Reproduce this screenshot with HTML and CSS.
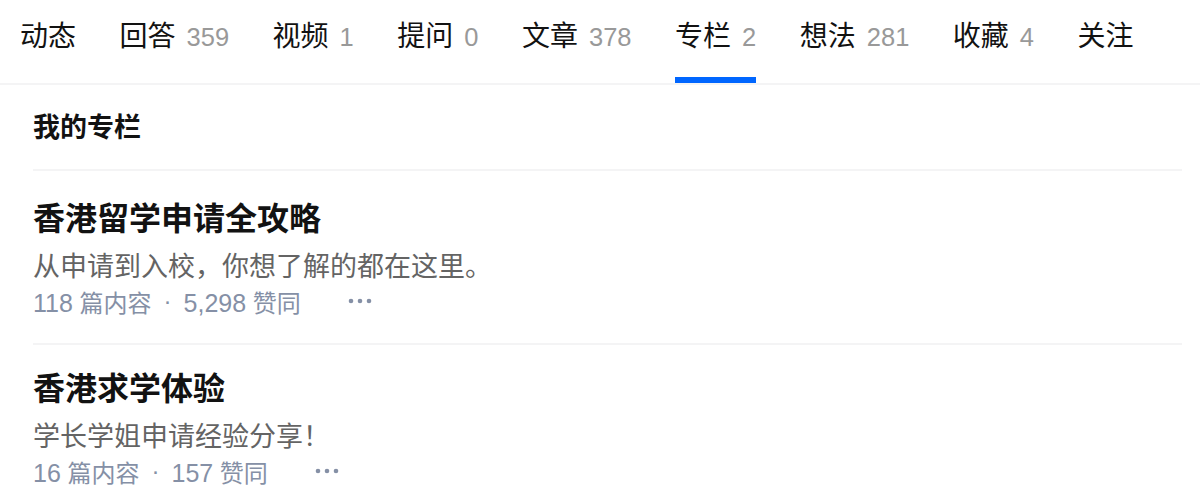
FILE: index.html
```html
<!DOCTYPE html>
<html lang="zh-CN">
<head>
<meta charset="utf-8">
<title>专栏</title>
<link rel="stylesheet" href="styles.css">
</head>
<body>
<nav class="tabs">
  <a class="tab">动态</a>
  <a class="tab">回答<span class="count">359</span></a>
  <a class="tab">视频<span class="count">1</span></a>
  <a class="tab">提问<span class="count">0</span></a>
  <a class="tab">文章<span class="count">378</span></a>
  <a class="tab tab-active">专栏<span class="count">2</span></a>
  <a class="tab">想法<span class="count">281</span></a>
  <a class="tab">收藏<span class="count">4</span></a>
  <a class="tab">关注</a>
</nav>
<section class="list">
  <h2 class="list-header">我的专栏</h2>
  <div class="column-item">
    <h3 class="column-title">香港留学申请全攻略</h3>
    <p class="column-desc">从申请到入校，你想了解的都在这里。</p>
    <div class="column-meta">
      <span><span class="num">118</span> 篇内容</span><span class="dot">·</span><span><span class="num">5,298</span> 赞同</span>
      <button class="more" aria-label="更多"><svg width="24" height="6" viewBox="0 0 24 6"><circle cx="3" cy="3" r="2.3"/><circle cx="12" cy="3" r="2.3"/><circle cx="21" cy="3" r="2.3"/></svg></button>
    </div>
  </div>
  <div class="column-item">
    <h3 class="column-title">香港求学体验</h3>
    <p class="column-desc">学长学姐申请经验分享！</p>
    <div class="column-meta">
      <span><span class="num">16</span> 篇内容</span><span class="dot">·</span><span><span class="num">157</span> 赞同</span>
      <button class="more" aria-label="更多"><svg width="24" height="6" viewBox="0 0 24 6"><circle cx="3" cy="3" r="2.3"/><circle cx="12" cy="3" r="2.3"/><circle cx="21" cy="3" r="2.3"/></svg></button>
    </div>
  </div>
</section>
</body>
</html>
```

FILE: styles.css
```css
* { box-sizing: border-box; }
html, body {
  margin: 0;
  padding: 0;
  background: #fff;
}
body {
  font-family: "Liberation Sans", "Noto Sans CJK SC", sans-serif;
  color: #121212;
  overflow: hidden;
}
.tabs {
  display: flex;
  gap: 43.5px;
  height: 85px;
  padding-left: 20px;
  border-bottom: 2px solid #f4f4f5;
}
.tab {
  position: relative;
  display: flex;
  align-items: flex-start;
  padding-top: 17px;
  font-size: 28px;
  line-height: 40px;
  color: #121212;
  text-decoration: none;
  white-space: nowrap;
}
.count {
  margin-left: 11px;
  font-size: 25.5px;
  color: #999;
}
.tab-active::after {
  content: "";
  position: absolute;
  left: 0;
  right: 0;
  bottom: 0;
  height: 6px;
  background: #0066ff;
}
.list {
  padding: 0 18px 0 33px;
}
.list-header {
  margin: 0;
  padding: 25px 0 23px;
  font-size: 27px;
  line-height: 36px;
  font-weight: 700;
  border-bottom: 2px solid #f4f4f5;
}
.column-item {
  padding: 22px 0 24px;
  border-bottom: 2px solid #f4f4f5;
}
.column-item:first-of-type {
  padding-top: 26px;
}
.column-title {
  margin: 0;
  font-size: 32px;
  line-height: 44px;
  font-weight: 700;
}
.column-desc {
  margin: 7px 0 0;
  font-size: 27px;
  line-height: 38px;
  color: #646464;
}
.column-meta {
  display: flex;
  align-items: center;
  height: 36px;
  margin-top: -3px;
  font-size: 24px;
  color: #8590a6;
}
.num {
  font-size: 25px;
}
.dot {
  margin: 0 12px;
}
.more {
  display: flex;
  align-items: center;
  margin-left: 47px;
  padding: 0;
  border: 0;
  background: none;
  fill: #8590a6;
}
```
